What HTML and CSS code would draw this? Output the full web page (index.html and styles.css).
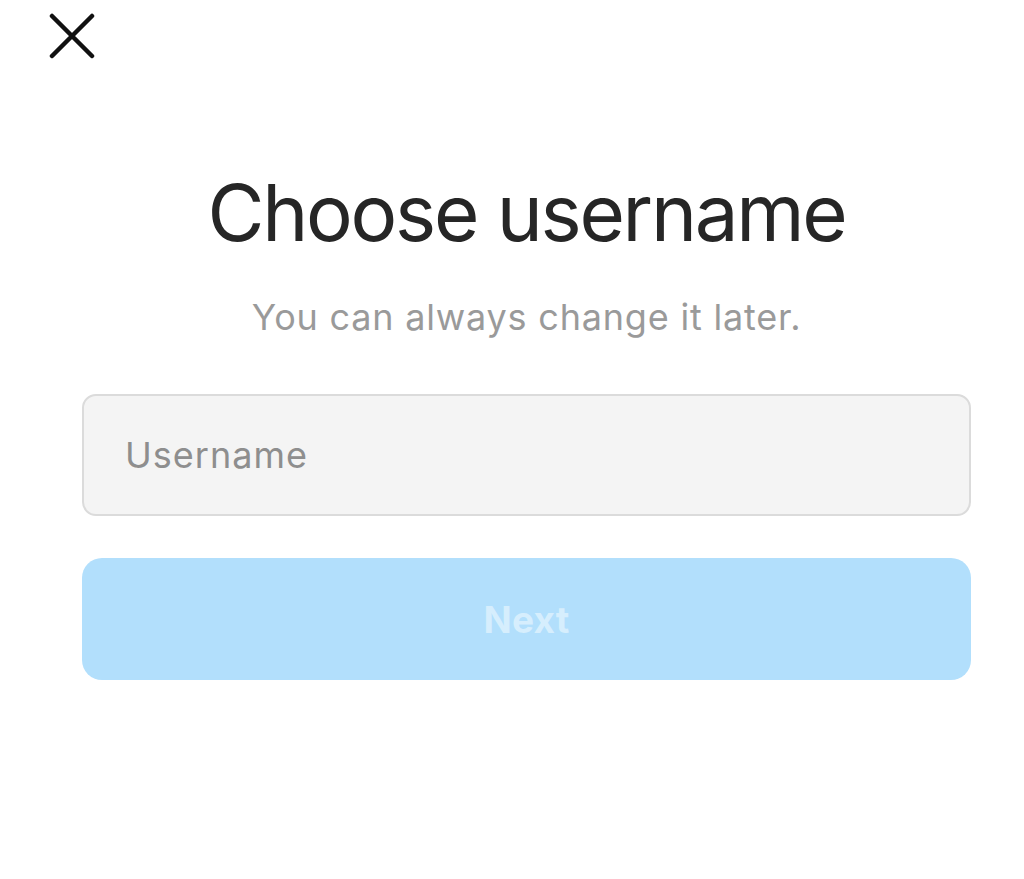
FILE: index.html
```html
<!DOCTYPE html>
<html lang="en">
<head>
<meta charset="utf-8">
<title>Choose username</title>
<link rel="stylesheet" href="styles.css">
</head>
<body>
<header class="topbar">
  <button class="close" aria-label="Close">
    <svg width="46" height="46" viewBox="0 0 46 46" fill="none" stroke="#111" stroke-width="4.5" stroke-linecap="round">
      <path d="M3 3 L43 43 M43 3 L3 43"/>
    </svg>
  </button>
</header>
<main class="content">
  <h1 class="title">Choose username</h1>
  <p class="subtitle">You can always change it later.</p>
  <input class="field" type="text" placeholder="Username">
  <button class="next">Next</button>
</main>
</body>
</html>
```
FILE: styles.css
```css
* { box-sizing: border-box; }
html, body { margin: 0; padding: 0; background: #fff; }
body { font-family: Inter, "Noto Sans", sans-serif; }
.topbar { padding: 13px 0 0 49px; height: 59px; }
.close { display: block; padding: 0; margin: 0; border: 0; background: none; width: 46px; height: 46px; }
.close svg { display: block; }
.content {
  margin-left: 82px;
  width: 889px;
  display: flex;
  flex-direction: column;
  align-items: stretch;
  text-align: center;
}
.title {
  margin: 107px 0 0;
  font-size: 78px;
  line-height: 94px;
  font-weight: 400;
  letter-spacing: -2.3px;
  color: #262626;
}
.subtitle {
  margin: 35px 0 0;
  font-size: 36px;
  line-height: 44px;
  letter-spacing: 0.8px;
  color: #9a9a9a;
}
.field {
  margin-top: 55px;
  height: 122px;
  border: 2px solid #dbdbdb;
  border-radius: 14px;
  background: #f4f4f4;
  padding: 0 0 0 41px;
  font-family: inherit;
  font-size: 36px;
  letter-spacing: 1px;
  color: #262626;
  outline: none;
}
.field::placeholder { color: #8e8e8e; }
.next {
  margin-top: 42px;
  height: 122px;
  border: 0;
  border-radius: 20px;
  background: #b2dffc;
  color: #d6eefd;
  font-family: inherit;
  font-size: 37px;
  font-weight: 700;
  letter-spacing: 0.3px;
}
```
